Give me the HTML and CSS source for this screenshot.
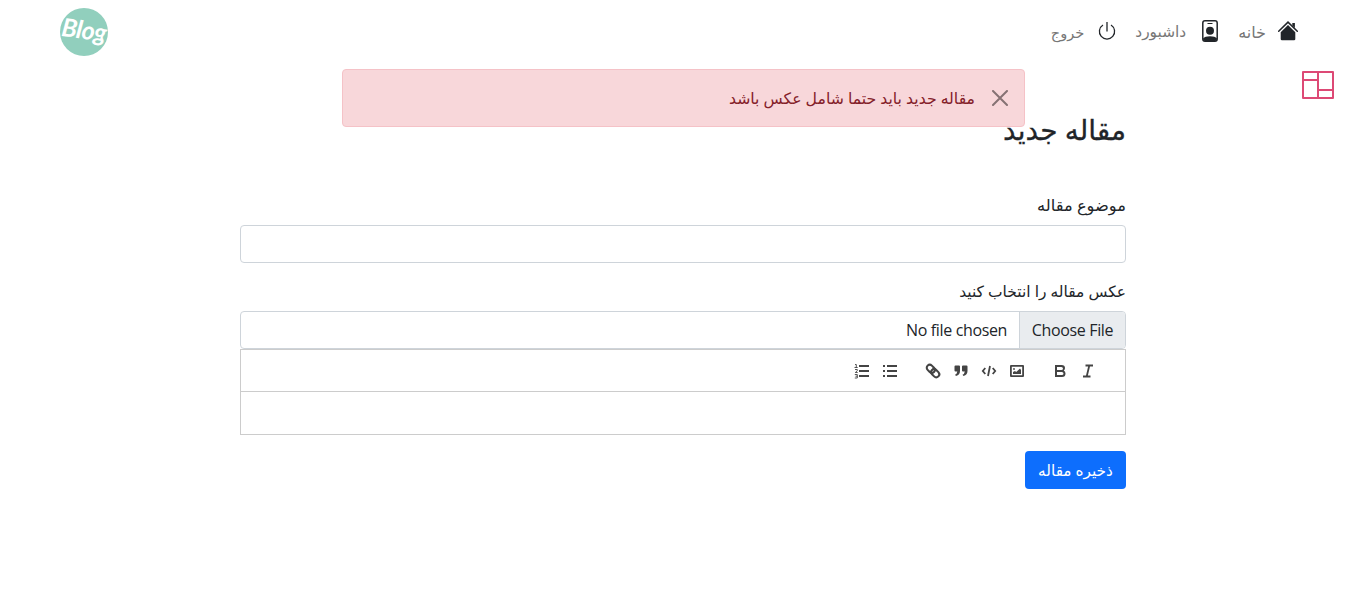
FILE: index.html
```html
<!DOCTYPE html>
<html lang="fa" dir="rtl">
<head>
<meta charset="utf-8">
<title>مقاله جدید</title>
<link rel="stylesheet" href="styles.css">
</head>
<body>
<header class="navbar">
  <nav class="menu">
    <a class="item home"><svg width="20" height="20" viewBox="0 0 20 20"><path d="M10 4 17.300 11.300V18q0 1.300-1.300 1.300H4Q2.700 19.300 2.700 18V11.300Z" fill="#212529"/><path d="M.7 10.300 10 1.100l9.300 9.200" fill="none" stroke="#212529" stroke-width="1.500" stroke-linecap="round"/><path d="M14.300 2h2.600v5l-2.600-2.400z" fill="#212529"/></svg><span>خانه</span></a>
    <a class="item dash"><svg width="18" height="22" viewBox="0 0 18 22"><rect x="1.800" y=".8" width="14.400" height="20.400" rx="2.200" fill="#fff" stroke="#212529" stroke-width="1.500"/><path d="M6.500 3.500h5" stroke="#212529" stroke-width="1"/><circle cx="9" cy="10.800" r="4" fill="#212529"/><path d="M2 18.500q2-2.200 7-2.200t7 2.200v.5q0 2-2 2H4q-2 0-2-2z" fill="#212529"/></svg><span>داشبورد</span></a>
    <a class="item exit"><svg width="18" height="20" viewBox="0 0 18 20"><path d="M9 1v9.500M5 4a7.600 7.600 0 1 0 8 0" fill="none" stroke="#212529" stroke-width="1.300"/></svg><span>خروج</span></a>
  </nav>
  <div class="logo"><span>Blog</span></div>
</header>
<div class="alert"><svg width="16" height="16" viewBox="0 0 16 16"><path d="m1 1 14 14M15 1 1 15" stroke="#867274" stroke-width="2" stroke-linecap="round"/></svg><span>مقاله جدید باید حتما شامل عکس باشد</span></div>
<svg class="columns" width="32" height="28" viewBox="0 0 32 28"><path d="M1 1h30v26H1zM16 1v26M1 9h15M16 19h15" fill="none" stroke="#dd4975" stroke-width="2" stroke-linejoin="round"/></svg>
<main class="form">
  <h1><span>مقاله جدید</span></h1>
  <label class="label-title"><span>موضوع مقاله</span></label>
  <input class="field" type="text">
  <label class="label-file"><span>عکس مقاله را انتخاب کنید</span></label>
  <div class="file"><span class="choose">Choose File</span><span class="chosen">No file chosen</span></div>
  <section class="editor">
    <div class="tools">
      <div class="group">
        <svg viewBox="0 0 18 18"><path d="M6.500 3.500H14M4 14.500h7.500M10.300 3.500 7.700 14.500" fill="none" stroke="#444" stroke-width="1.800"/></svg>
        <svg viewBox="0 0 18 18"><path fill-rule="evenodd" d="M4 3h6.500Q14 3 14 6q0 1.800-1.200 2.600Q14.500 9.500 14.500 11.500 14.500 15 11 15H4zm2 2v3h4.300Q12 8 12 6.500T10.300 5zm0 5v3h4.800q1.700 0 1.700-1.500T10.800 10z"/></svg>
      </div>
      <div class="group">
        <svg viewBox="0 0 18 18"><path fill-rule="evenodd" d="M3 3h12q1 0 1 1v10q0 1-1 1H3q-1 0-1-1V4q0-1 1-1zm.8 1.800v8.400h10.400V4.800z"/><path d="M5 12v-2l2-1 1.200 1L12 6.500l1 1.500v4z"/><circle cx="6" cy="7" r=".9"/></svg>
        <svg viewBox="0 0 18 18"><path d="M5.300 6 2.800 9l2.500 3M12.700 6l2.500 3-2.500 3M10 4 8 14" fill="none" stroke="#444" stroke-width="1.800"/></svg>
        <svg viewBox="0 0 18 18"><path d="M3.500 3.500H7q1 0 1 1V9q0 4-4 5l-1-1.300Q5 12 5.300 9.500H3.500q-1 0-1-1v-4q0-1 1-1zM11 3.500h3.500q1 0 1 1V9q0 4-4 5l-1-1.300q2-.7 2.300-3.200H11q-1 0-1-1v-4q0-1 1-1z"/></svg>
        <svg viewBox="0 0 18 18"><g fill="none" stroke="#444" stroke-width="2.100" transform="rotate(45 9 9)"><rect x="1.400" y="6" width="9" height="6" rx="3"/><rect x="7.600" y="6" width="9" height="6" rx="3"/></g></svg>
      </div>
      <div class="group">
        <svg viewBox="0 0 18 18"><path d="M2 3h2v2H2zM2 8h2v2H2zM2 13h2v2H2zM6 3h10v2H6zM6 8h10v2H6zM6 13h10v2H6z"/></svg>
        <svg viewBox="0 0 18 18"><path d="M6 3h10v2H6zM6 8h10v2H6zM6 13h10v2H6z"/><path d="M2 2.500h1.300V5.500M1.500 5.500h3.200M2 7.500h2.300v1.200L2.300 10.500H4.700M1.800 12.500h2.500v3.500H1.800M2.500 14.200h2" fill="none" stroke="#444" stroke-width=".9"/></svg>
      </div>
    </div>
    <div class="content"></div>
  </section>
  <button class="save"><span>ذخیره مقاله</span></button>
</main>
</body>
</html>
```
FILE: styles.css
```css
* { box-sizing: border-box; }
body { margin: 0; background: #fff; color: #212529; font: 16px/24px "Noto Sans", "DejaVu Sans", sans-serif; }
svg { display: block; flex: none; }
span { white-space: nowrap; }
.navbar { height: 64px; padding: 0 68px 0 60px; display: flex; justify-content: space-between; align-items: center; }
.menu { display: flex; color: #777; height: 24px; align-items: center; }
.item { display: flex; align-items: center; gap: 12px; height: 24px; }
.item svg { margin-top: -3px; }
.dash { margin-right: 19px; gap: 15px; font-size: 15.400px; line-height: 26px; }
.exit { margin-right: 19px; gap: 14px; font-size: 14.600px; }
.logo { width: 48px; height: 48px; border-radius: 50%; background: #91cfbd; color: #fff; display: flex; align-items: center; justify-content: center; direction: ltr; }
.logo span { font: italic 700 25px/44px Lato, sans-serif; letter-spacing: -.5px; transform: translateY(-3px) rotate(8deg); }
.alert { position: absolute; left: 342px; top: 69px; width: 683px; height: 58px; border: 1px solid #f5c2c7; border-radius: 4px; background: #f8d7da; color: #842029; display: flex; align-items: center; gap: 17px; padding: 0 16px; font-size: 15.700px; }
.columns { position: absolute; right: 32px; top: 71px; }
.form { width: 886px; margin: 48px auto 0; display: flex; flex-direction: column; }
h1 { margin: 0 0 59px; height: 34px; font-size: 28px; line-height: 35px; font-weight: 500; -webkit-text-stroke: .3px #212529; }
label { height: 24px; margin-bottom: 8px; margin-top: -12px; }
.label-title { font-size: 16.300px; }
.field { width: 100%; height: 38px; border: 1px solid #ced4da; border-radius: 4px; margin: 0; }
.label-file { margin-top: 16px; font-size: 15.500px; }
.file { height: 38px; border: 1px solid #ced4da; border-radius: 4px; display: flex; font: 16px/36px "Open Sans", sans-serif; letter-spacing: -.36px; overflow: hidden; }
.choose { width: 106px; background: #e9ecef; border-left: 1px solid #ced4da; text-align: center; }
.chosen { padding-right: 12px; }
.editor { border: 1px solid #ccc; height: 86px; }
.tools { height: 42px; border-bottom: 1px solid #ccc; display: flex; align-items: center; gap: 15px; padding-right: 23px; }
.group { display: flex; }
.group svg { width: 28px; height: 18px; fill: #444; }
.content { height: 42px; }
.save { width: 101px; height: 38px; margin: 16px 0 0; padding: 0; border: 0; border-radius: 4px; background: #0d6efd; color: #fff; font: 15.300px/24px "Noto Sans", "DejaVu Sans", sans-serif; }
```
